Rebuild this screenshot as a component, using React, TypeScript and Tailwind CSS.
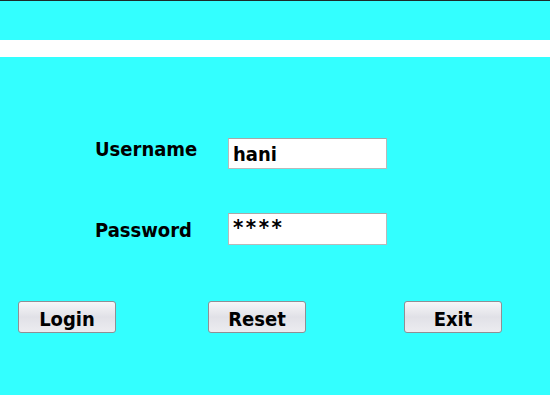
import React from 'react'

const font = { fontFamily: '"DejaVu Sans Condensed", "DejaVu Sans", sans-serif' }

function Field({
  label,
  value,
  mt,
  labelMt,
  inputH,
  valueClass,
}: {
  label: string
  value: string
  mt: string
  labelMt: string
  inputH: string
  valueClass: string
}) {
  return (
    <div className={`flex items-start ${mt}`}>
      <label className={`w-[133px] text-[20px] leading-[20px] font-bold text-black ${labelMt}`}>{label}</label>
      <input
        readOnly
        value={value}
        className={`w-[159px] ${inputH} bg-white border border-[#b9b9b9] border-t-[#a8a8a8] pl-[4px] font-bold text-black outline-none ${valueClass}`}
        style={font}
      />
    </div>
  )
}

function ActionButton({ children }: { children: React.ReactNode }) {
  return (
    <button
      className="w-[98px] h-[32px] pt-[3px] rounded-[3px] border border-[#8f8f94] bg-gradient-to-b from-[#f6f6f8] via-[#e1e1e7] to-[#ececf0] text-[20px] font-bold text-black leading-none"
      style={font}
    >
      {children}
    </button>
  )
}

export default function App() {
  return (
    <div className="w-[550px] h-[400px] bg-white flex flex-col overflow-hidden" style={font}>
      <div className="h-px bg-[#1c2b2b]" />
      <div className="h-[39px] bg-[#33ffff]" />
      <div className="h-[17px] bg-white" />
      <div className="h-[338px] bg-[#33ffff]">
        {/* form */}
        <div className="pl-[95px] pt-[81px]">
          <Field label="Username" value="hani" mt="mt-0" labelMt="mt-[1px]" inputH="h-[31px]" valueClass="text-[20px]" />
          <Field
            label="Password"
            value="****"
            mt="mt-[44px]"
            labelMt="mt-[7px]"
            inputH="h-[32px]"
            valueClass="text-[22px] tracking-[2.5px] pb-[4px]"
          />
        </div>
        {/* buttons */}
        <div className="flex mt-[56px] pl-[18px]">
          <ActionButton>Login</ActionButton>
          <div className="w-[92px]" />
          <ActionButton>Reset</ActionButton>
          <div className="w-[98px]" />
          <ActionButton>Exit</ActionButton>
        </div>
      </div>
    </div>
  )
}
